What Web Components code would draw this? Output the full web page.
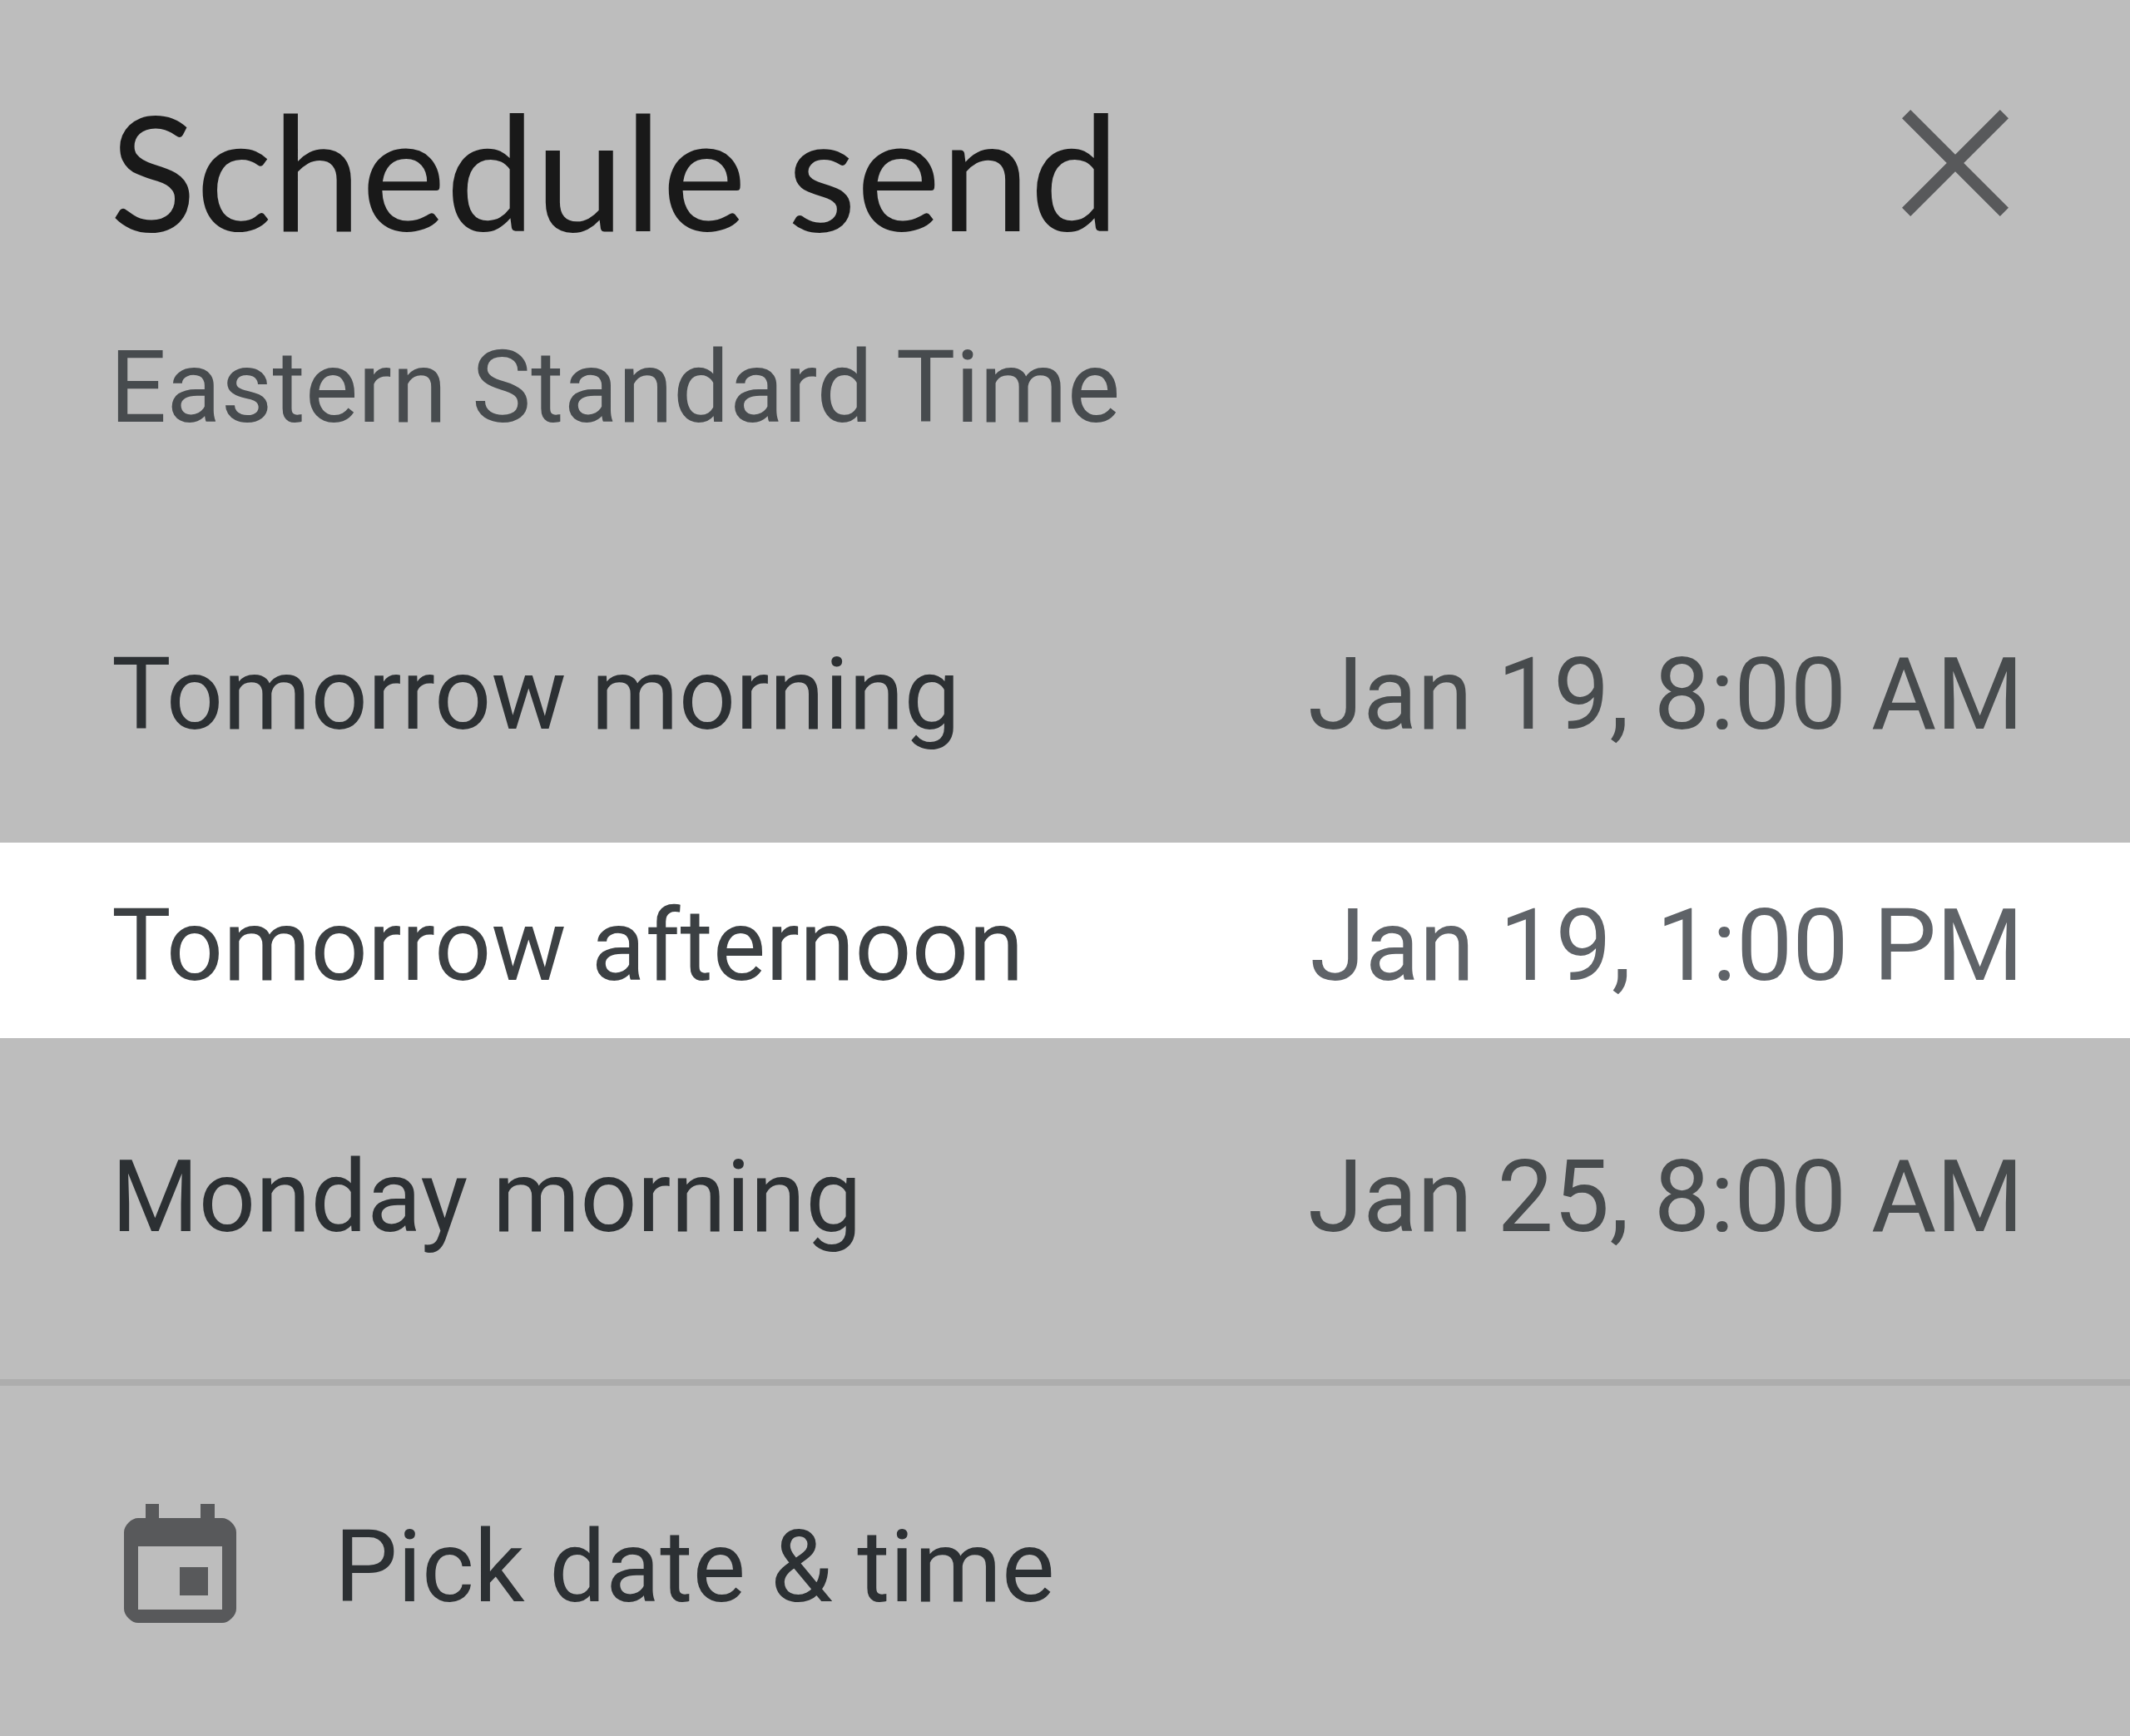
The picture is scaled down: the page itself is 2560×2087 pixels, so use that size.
<!DOCTYPE html>
<html lang="en">
<head>
<meta charset="utf-8">
<title>Schedule send</title>
<style>
  body { margin: 0; min-height: 100vh; background: #bdbdbd; font-family: Roboto, sans-serif; font-size: 120px; line-height: 140px; }
</style>
</head>
<body>
<schedule-dialog>
  <span slot="title">Schedule send</span>
  <span slot="zone">Eastern Standard Time</span>
  <schedule-option><span>Tomorrow morning</span><span slot="time">Jan 19, 8:00 AM</span></schedule-option>
  <schedule-option active><span>Tomorrow afternoon</span><span slot="time">Jan 19, 1:00 PM</span></schedule-option>
  <schedule-option><span>Monday morning</span><span slot="time">Jan 25, 8:00 AM</span></schedule-option>
  <date-picker-button slot="footer">Pick date &amp; time</date-picker-button>
</schedule-dialog>
<script>
class BaseElement extends HTMLElement {
  constructor() {
    super();
    this.attachShadow({ mode: 'open' }).innerHTML = `
      <style>
        * { box-sizing: border-box; }
        button { border: 0; margin: 0; padding: 0; background: none; font: inherit; color: inherit; text-align: left; cursor: pointer; }
        svg { display: block; flex: none; }
      </style>${this.constructor.markup}`;
  }
}

class ScheduleDialog extends BaseElement {
  static markup = `
    <style>
      :host { display: block; }
      header { padding: 124px 132px 0; }
      .bar { display: flex; justify-content: space-between; align-items: flex-start; }
      h2 { margin: 0; font: 400 192px/160px Lato, sans-serif; color: #191919; }
      p { margin: 112px 0 0; font-size: 120px; color: #474b4e; }
      close-button { margin: 8px 14px 0 0; }
      .options { display: flex; flex-direction: column; gap: 67px; padding: 175px 0 108px; }
      footer { border-top: 8px solid #adadad; }
    </style>
    <section role="dialog" aria-labelledby="title">
      <header>
        <div class="bar"><h2 id="title"><slot name="title"></slot></h2><close-button></close-button></div>
        <p><slot name="zone"></slot></p>
      </header>
      <div class="options"><slot></slot></div>
      <footer><slot name="footer"></slot></footer>
    </section>`;
}

class CloseButton extends BaseElement {
  static markup = `
    <style>:host { display: block; color: #58595b; } button { display: block; }</style>
    <button type="button" aria-label="Close">
      <svg width="128" height="128" viewBox="0 0 128 128" fill="none" stroke="currentColor" stroke-width="14.4"><path d="M5.1 5.1 122.9 122.9M122.9 5.1 5.1 122.9"/></svg>
    </button>`;
}

class ScheduleOption extends BaseElement {
  static markup = `
    <style>
      :host { display: block; color: #2c3033; --time: #474b4d; }
      :host([active]) { background: #fff; color: #3c4043; --time: #5f6368; }
      button { display: flex; justify-content: space-between; align-items: center; width: 100%; padding: 54px 128px 41px 134px; white-space: nowrap; }
      .time { color: var(--time); }
    </style>
    <button type="button"><span><slot></slot></span><span class="time"><slot name="time"></slot></span></button>`;
}

class DatePickerButton extends BaseElement {
  static markup = `
    <style>
      :host { display: block; color: #2c3033; }
      button { display: flex; align-items: flex-end; gap: 117px; width: 100%; padding: 142px 149px 130px; }
      svg { color: #58595b; margin-bottom: 2px; }
    </style>
    <button type="button">
      <svg width="136" height="144" viewBox="0 0 136 144" fill="currentColor" aria-hidden="true">
        <path fill-rule="evenodd" d="M26 0H42V17H92V0H109V17H118Q124 17 129.500 22.500Q135 28 135 34V126Q135 132 129.500 137.500Q124 143 118 143H17Q11 143 5.500 137.500Q0 132 0 126V34Q0 28 5.500 22.500Q11 17 17 17H26ZM17 51V127H118V51Z"/>
        <path d="M67 76H101V110H67Z"/>
      </svg>
      <span><slot></slot></span>
    </button>`;
}

customElements.define('close-button', CloseButton);
customElements.define('schedule-option', ScheduleOption);
customElements.define('date-picker-button', DatePickerButton);
customElements.define('schedule-dialog', ScheduleDialog);
</script>
</body>
</html>
